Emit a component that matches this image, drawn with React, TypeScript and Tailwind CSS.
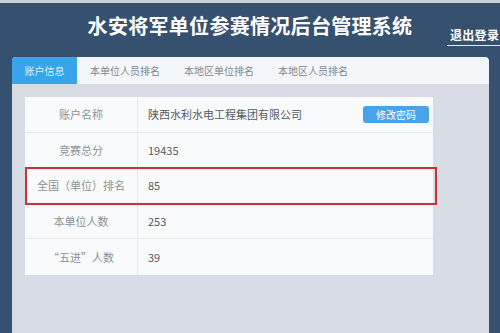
const tabs = ["账户信息", "本单位人员排名", "本地区单位排名", "本地区人员排名"];

const rows = [
  { label: "账户名称", value: "陕西水利水电工程集团有限公司", button: true },
  { label: "竞赛总分", value: "19435" },
  { label: "全国（单位）排名", value: "85", mark: true },
  { label: "本单位人数", value: "253" },
  { label: "“五进”人数", value: "39" },
];

export default function App() {
  return (
    <div
      className="w-[500px] h-[333px] overflow-hidden bg-[#36516f] border-t-[3px] border-[#c9d0d8] flex flex-col"
      style={{ fontFamily: '"Noto Sans CJK SC", "Noto Sans", sans-serif' }}
    >
      {/* header */}
      <div className="relative h-[54px] shrink-0">
        <h1 className="text-center text-white font-bold text-[20px] leading-[20px] pt-[13px] tracking-[0.3px]">
          水安将军单位参赛情况后台管理系统
        </h1>
        <a className="absolute right-0 top-[25px] w-[53px] pl-[3px] pb-[3px] border-b border-[#e6ebf0] text-white font-bold text-[12px] leading-[14px] tracking-[0.3px]">
          退出登录
        </a>
      </div>

      {/* panel */}
      <div className="mx-[12px] mr-[11px] flex-1 flex flex-col">
        <div className="h-[27px] bg-[#f4f6f9] rounded-t-[4px] flex text-[10px] text-[#808891]">
          <div className="w-[65px] bg-[#36a5e9] rounded-tl-[4px] text-[#dff1fd] flex items-center justify-center">
            {tabs[0]}
          </div>
          <div className="pl-[13px] flex items-center gap-[24px]">
            {tabs.slice(1).map((t) => (
              <span key={t}>{t}</span>
            ))}
          </div>
        </div>

        <div className="flex-1 bg-[#d8dde5] pt-[13px] pl-[13px] pr-[56px]">
          <div className="relative bg-[#f9fafb]">
            {rows.map((r, i) => (
              <div
                key={r.label}
                className={
                  "flex h-[35.5px] text-[11px] " +
                  (i < rows.length - 1 ? "border-b border-[#eaedf0]" : "")
                }
              >
                <div className="w-[113px] border-r border-[#e6e9ec] flex items-center justify-center text-[#8d9298]">
                  {r.label}
                </div>
                <div className="flex-1 flex items-center pl-[10px] pr-[4px] text-[#555a60]">
                  <span className="flex-1">{r.value}</span>
                  {r.button && (
                    <button className="w-[66px] h-[17px] rounded-[3px] bg-[#49a3ea] text-white text-[10px] leading-[17px]">
                      修改密码
                    </button>
                  )}
                </div>
              </div>
            ))}
            {/* highlight box */}
            <div className="absolute left-0 -right-[4px] top-[70px] h-[38px] border-2 border-[#cf3038]" />
          </div>
        </div>
      </div>
    </div>
  );
}
